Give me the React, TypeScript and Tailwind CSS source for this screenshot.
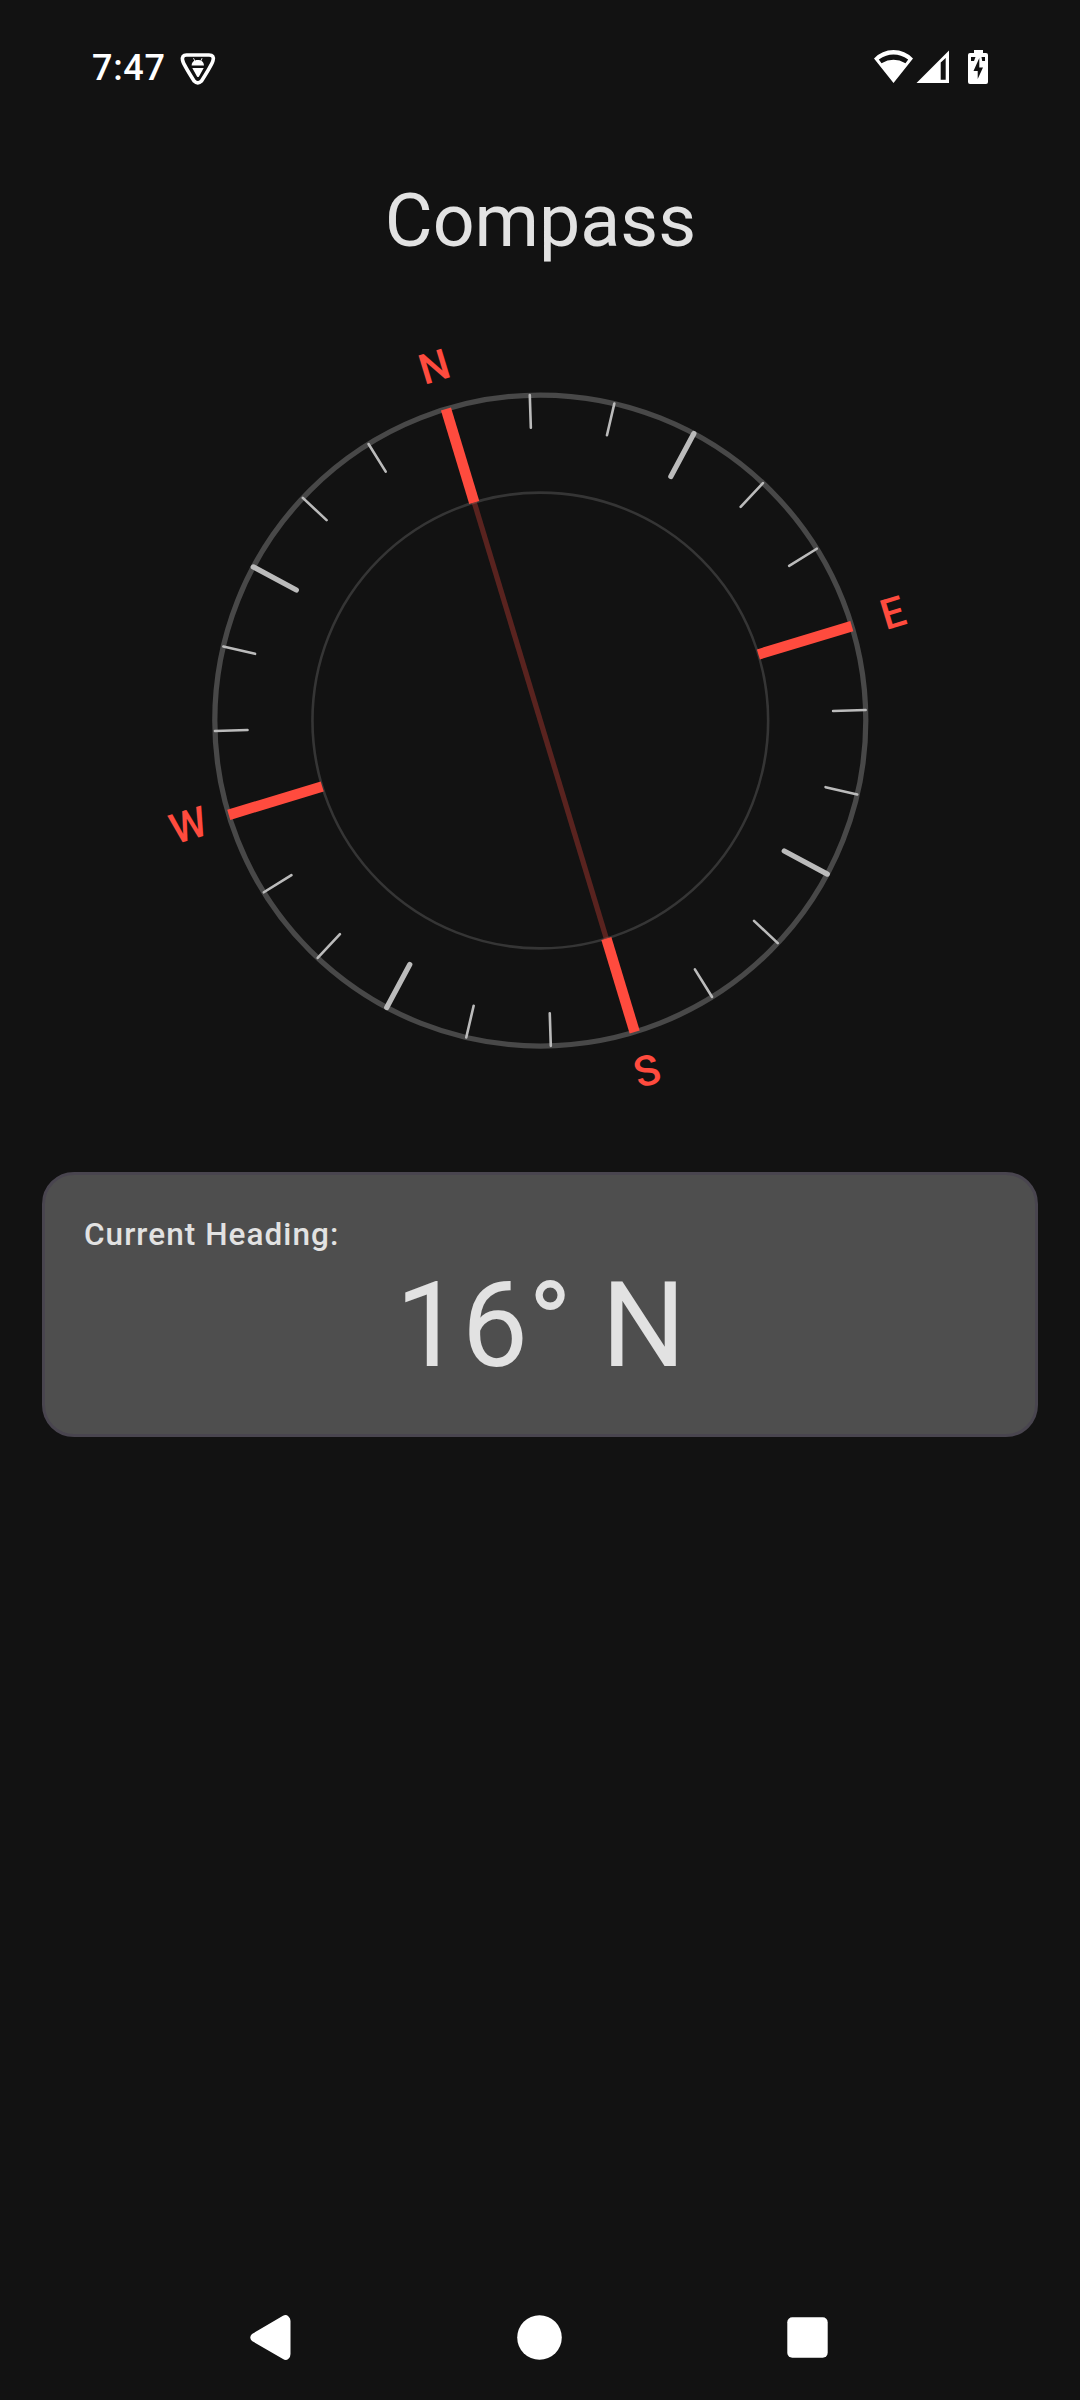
const RED = '#ff4b3e';
const CX = 540.3;
const CY = 720.5;
const R = 325.5;
const HEADING = 16.85;

function CompassDial() {
  const ticks = Array.from({ length: 24 }, (_, i) => i * 15);
  const labels = [
    { text: 'N', x: 1, y: -368.5 },
    { text: 'E', x: 368.5, y: 0 },
    { text: 'S', x: 0.5, y: 367 },
    { text: 'W', x: -367, y: -1 },
  ];
  const a = (-HEADING * Math.PI) / 180;
  return (
    <svg className="block h-[840px] w-[1080px]" viewBox="0 300 1080 840">
      <circle cx={CX} cy={CY} r={R} fill="none" stroke="#484848" strokeWidth={5.25} />
      <circle cx={CX} cy={CY} r={R * 0.7} fill="none" stroke="#353535" strokeWidth={2.6} />
      <g transform={`translate(${CX} ${CY}) rotate(${-HEADING})`}>
        <line x1={0} y1={-R * 0.7} x2={0} y2={R * 0.7} stroke={RED} strokeOpacity={0.3} strokeWidth={5.25} />
        {ticks.map((deg) => {
          const cardinal = deg % 90 === 0;
          const major = deg % 45 === 0;
          return (
            <line
              key={deg}
              x1={0}
              x2={0}
              y1={-R}
              y2={-R * (cardinal ? 0.7 : major ? 0.85 : 0.9)}
              transform={`rotate(${deg})`}
              stroke={cardinal ? RED : '#bbbbbb'}
              strokeWidth={cardinal ? 10.5 : major ? 5.25 : 2.6}
              strokeLinecap={cardinal ? 'butt' : 'round'}
            />
          );
        })}
      </g>
      {labels.map(({ text, x, y }) => (
        <text
          key={text}
          transform={`translate(${CX + x * Math.cos(a) - y * Math.sin(a)} ${CY + x * Math.sin(a) + y * Math.cos(a)}) rotate(${-HEADING})`}
          y={13.8}
          textAnchor="middle"
          className="fill-[#ff4b3e] text-[42px] font-medium"
        >
          {text}
        </text>
      ))}
    </svg>
  );
}

function StatusBar() {
  return (
    <header className="flex h-[136px] items-start justify-between pr-[90px] pl-[92px] text-white">
      <div className="flex pt-[46px]">
        <span className="w-[88px] pt-px text-[36px] leading-[42px] font-medium tracking-[0.7px]">7:47</span>
        <svg className="mt-[5px] h-[36px] w-[38px]" viewBox="180 51 38 36">
          <path
            d="M186.500 55h22.500q5.500 0 4 5.500-1 4-11.500 20.500-3.700 3.800-7.400 0Q183.600 64.500 182.600 60.500q-1-5.500 3.900-5.500Z"
            fill="none"
            stroke="white"
            strokeWidth="3.600"
            strokeLinejoin="round"
          />
          <path d="M191.600 65.500c.2-2.300 1.200-3.800 2.700-4.700l-1.200-2.500.7-.3 1.300 2.500c1.700-.6 3.700-.6 5.400 0l1.300-2.500.7.300-1.200 2.500c1.500.9 2.500 2.400 2.700 4.700ZM192.300 68h11.400l-4.700 8.500q-1 1.200-2 0Z" fill="white" />
        </svg>
      </div>
      <svg className="mt-[48px] h-[40px] w-[120px]" viewBox="870 48 120 40">
        <path fillRule="evenodd" d="M893.500 83 874 58.500Q882 50 893.500 50T913 58.500ZM881.500 63.200Q893.500 56.300 905.500 63.200L908.200 59.500Q893.500 49.500 878.800 59.500Z" fill="white" />
        <path fillRule="evenodd" d="M949 50.500V83H916.500ZM940.700 62.500V79.700H945.700V58Z" fill="white" />
        <path
          fillRule="evenodd"
          d="M974 50h9v3h3q2 0 2 2v27q0 2-2 2h-16q-2 0-2-2V55q0-2 2-2h4ZM979.300 58 973.500 71h4.200V79L983 67.500h-3.700ZM971 57v4h3l1.500-4ZM981.500 57l.7 4h2.800v-4Z"
          fill="white"
        />
      </svg>
    </header>
  );
}

export default function App() {
  return (
    <div className="flex h-[2400px] w-[1080px] flex-col overflow-hidden bg-[#121212] font-['Roboto',sans-serif] text-[#e2e2e2]">
      <StatusBar />
      <h1 className="h-[164px] pt-[37px] pl-px text-center text-[73.5px] leading-[96px]">Compass</h1>
      <CompassDial />
      <section className="mx-[42px] mt-[32px] h-[265px] rounded-[32px] border-[3px] border-[#49454f] bg-[#4e4e4e] px-[39px] pt-[39px]">
        <p className="text-[31.5px] leading-[42px] font-medium tracking-[1.05px]">Current Heading:</p>
        <p className="pt-px pl-px text-center text-[118px] leading-[138px]">16° N</p>
      </section>
      <nav className="mt-auto flex h-[126px] items-center justify-center">
        <svg className="h-[60px] w-[620px]" viewBox="230 2307 620 60" fill="white">
          <path d="M252 2334 283 2315.800Q286 2314 288.500 2316.500 290.500 2318 290.500 2321V2354Q290.500 2357 288.500 2358.700 286 2361 283 2359L252 2341Q248.500 2337.500 252 2334Z" />
          <circle cx="539.500" cy="2337.500" r="22.300" />
          <rect x="787.300" y="2317.300" width="40.400" height="40.400" rx="5" />
        </svg>
      </nav>
    </div>
  );
}
